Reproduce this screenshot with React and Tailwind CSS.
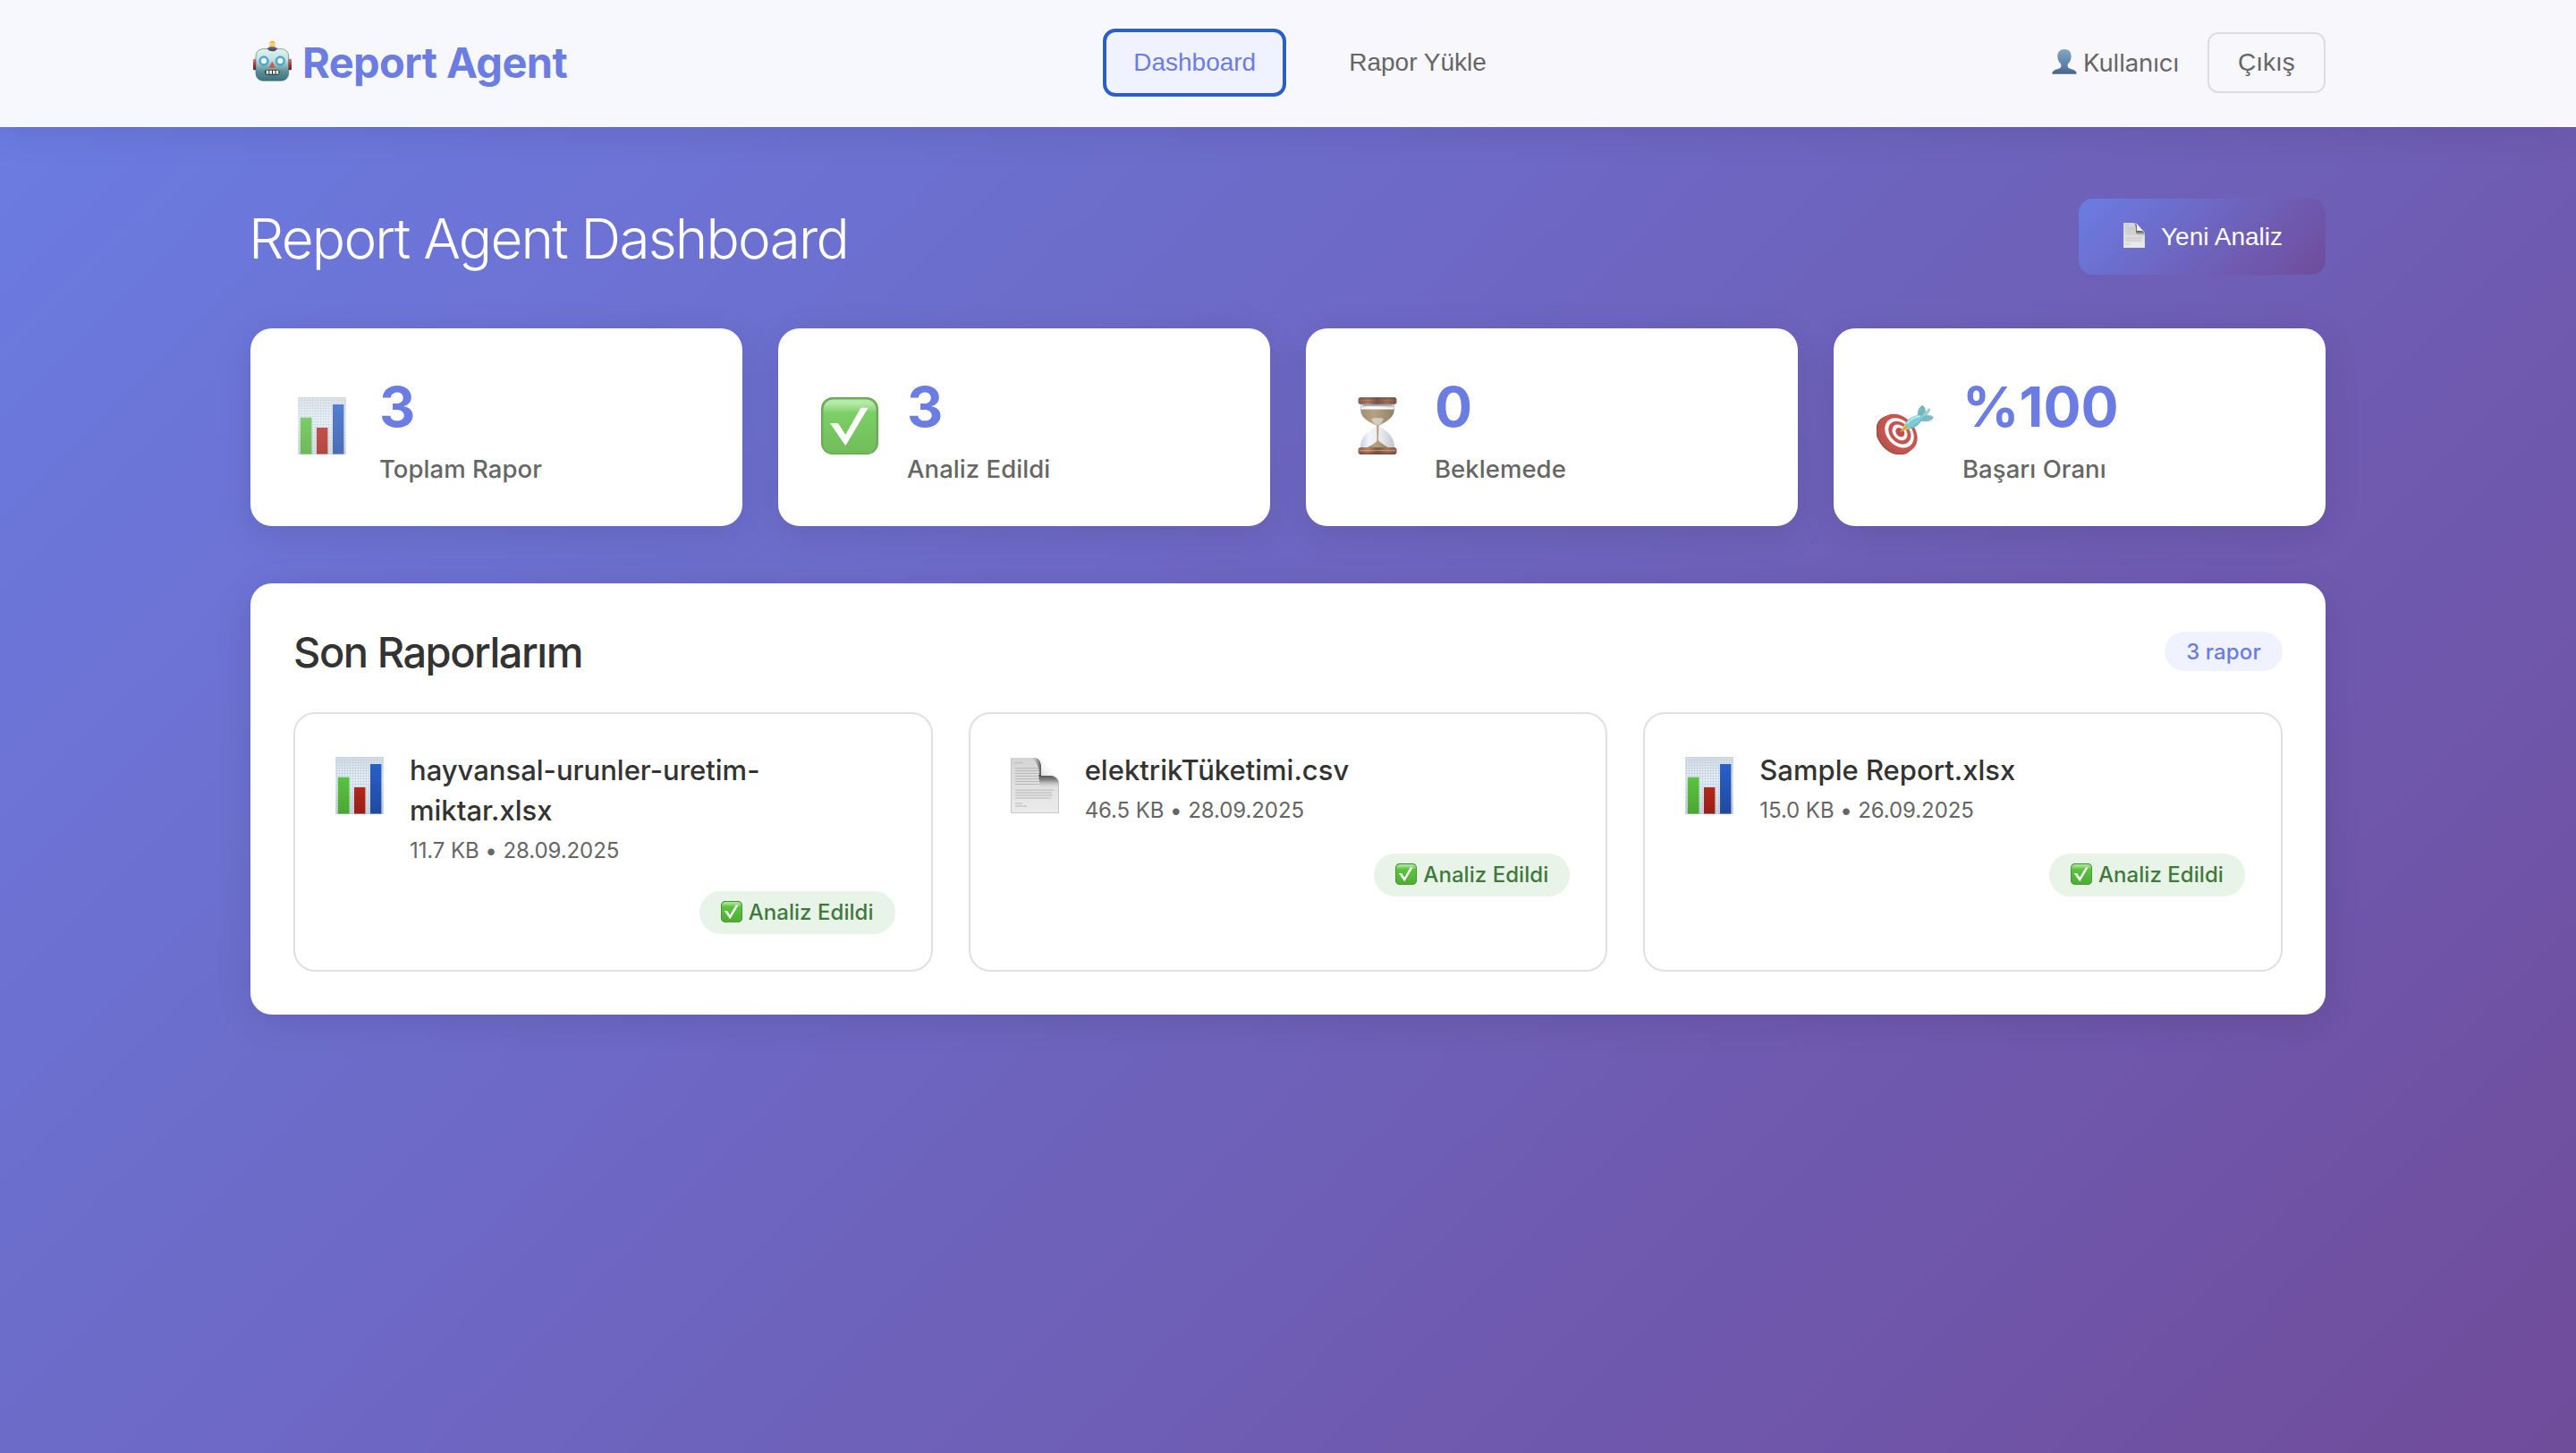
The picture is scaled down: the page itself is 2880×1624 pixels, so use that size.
import React, { useId } from "react";

function RobotIcon({ className }) {
  return (
    <svg className={className} viewBox="12 27 174 135" aria-hidden="true">
      <defs>
        <linearGradient id="robotFace" x1="0" y1="0" x2="0" y2="1">
          <stop offset="0" stopColor="#dff5f0" />
          <stop offset="0.35" stopColor="#c3dfe0" />
          <stop offset="0.7" stopColor="#5b8f99" />
          <stop offset="1" stopColor="#3d7280" />
        </linearGradient>
        <linearGradient id="robotBulb" x1="0" y1="0" x2="0" y2="1">
          <stop offset="0" stopColor="#f59a2e" />
          <stop offset="0.55" stopColor="#ffe37a" />
          <stop offset="1" stopColor="#e8922a" />
        </linearGradient>
        <linearGradient id="robotEar" x1="0" y1="0" x2="0" y2="1">
          <stop offset="0" stopColor="#e08078" />
          <stop offset="0.5" stopColor="#b03632" />
          <stop offset="1" stopColor="#5c1c1e" />
        </linearGradient>
      </defs>
      <rect x="21" y="86" width="14" height="38" rx="4" fill="url(#robotEar)" />
      <rect x="136" y="86" width="14" height="38" rx="4" fill="url(#robotEar)" />
      <path d="M68 54 Q70 46 85 46 Q100 46 103 54 L98 60 H73 Z" fill="#5f4480" />
      <circle cx="85.500" cy="37" r="10.500" fill="url(#robotBulb)" />
      <rect x="30" y="53" width="110" height="107" rx="24" fill="url(#robotFace)" stroke="#33606b" strokeOpacity="0.55" strokeWidth="3" />
      <path d="M70 54 H101 Q97 61 85 61 Q74 61 70 54 Z" fill="#4d4270" />
      <circle cx="57" cy="93" r="15.500" fill="#56b4d6" stroke="#2d88ad" strokeWidth="2" />
      <circle cx="57" cy="93" r="9" fill="#f7fdff" />
      <circle cx="112" cy="93" r="15.500" fill="#56b4d6" stroke="#2d88ad" strokeWidth="2" />
      <circle cx="112" cy="93" r="9" fill="#f7fdff" />
      <path d="M85 95 L96 116 H74 Z" fill="#d2564c" />
      <rect x="60" y="123" width="50" height="17" rx="8.500" fill="#2b2f36" />
      <path d="M65 125.500h8v12h-8zM76 125.500h8v12h-8zM87 125.500h8v12h-8zM98 125.500h8v12h-8z" fill="#f4f1e8" />
    </svg>
  );
}

function UserIcon({ className }) {
  return (
    <svg className={className} viewBox="222 165 84 84" aria-hidden="true">
      <defs>
        <linearGradient id="bust" x1="0" y1="165" x2="0" y2="249" gradientUnits="userSpaceOnUse">
          <stop offset="0" stopColor="#84a7c7" />
          <stop offset="0.6" stopColor="#5f83a6" />
          <stop offset="1" stopColor="#46658a" />
        </linearGradient>
      </defs>
      <path
        fill="url(#bust)"
        d="M264 165c14 0 23 9 23 23 0 12-5 20-12 27v7c0 4 3 6 8 8 14 4 22 7 22 18H223c0-11 8-14 22-18 5-2 8-4 8-8v-7c-7-7-12-15-12-27 0-14 9-23 23-23z"
      />
    </svg>
  );
}

function PageIcon({ className }) {
  const id = useId();
  return (
    <svg className={className} viewBox="0 0 54 62" preserveAspectRatio="none" aria-hidden="true">
      <defs>
        <linearGradient id={id + "p"} x1="0" y1="0" x2="0" y2="1">
          <stop offset="0" stopColor="#d4d4d4" />
          <stop offset="1" stopColor="#ececec" />
        </linearGradient>
        <linearGradient id={id + "s"} x1="0" y1="0" x2="0" y2="1">
          <stop offset="0" stopColor="#4c4c4c" />
          <stop offset="0.4" stopColor="#8a8a8a" />
          <stop offset="1" stopColor="#dcdcdc" stopOpacity="0" />
        </linearGradient>
        <linearGradient id={id + "l"} x1="1" y1="0" x2="0" y2="0">
          <stop offset="0" stopColor="#555555" />
          <stop offset="1" stopColor="#c8c8c8" stopOpacity="0" />
        </linearGradient>
        <linearGradient id={id + "c"} x1="0" y1="1" x2="1" y2="0">
          <stop offset="0" stopColor="#c2c2c2" />
          <stop offset="0.5" stopColor="#f7f7f7" />
          <stop offset="1" stopColor="#dedede" />
        </linearGradient>
      </defs>
      <path d="M0 0H26C31 0 33 3 34 7L53 24C54 26 54 28 54 30V62H0Z" fill={"url(#" + id + "p)"} />
      <path d="M0.500 0V61.500H53.500V30" fill="none" stroke="#c6c6c6" />
      <path
        d="M5 5.500H13M5 11.500H32M5 14.500H31M5 17.500H32M5 20.500H30M5 23.500H32M5 26.500H34M5 29.500H32M5 36H48M5 39H46M5 42H47M5 45H45M5 51H13M5 54H18"
        stroke="#b8b8b8"
        strokeWidth="1"
      />
      <path d="M22 0H28C32 1 33 4 34 8V20H32C32 9 28 2 22 0Z" fill={"url(#" + id + "l)"} />
      <path d="M31 19H46C51 20 54 24 54 31V34L33 33Z" fill={"url(#" + id + "s)"} />
      <path d="M27 0C32 0 34 4 34 9V20H45C49 20 52 23 54 27C53 23 50 20 47 17L34 3C32 1 30 0 27 0Z" fill={"url(#" + id + "c)"} />
    </svg>
  );
}

function ChartIcon({ className }) {
  const id = useId();
  return (
    <svg className={className} viewBox="0 0 64 64" aria-hidden="true">
      <defs>
        <linearGradient id={id + "b"} x1="0" y1="0" x2="0" y2="1">
          <stop offset="0" stopColor="#d9dfe4" />
          <stop offset="0.4" stopColor="#e9eff5" />
          <stop offset="1" stopColor="#cfd3d6" />
        </linearGradient>
        <pattern id={id + "g"} width="3" height="3" patternUnits="userSpaceOnUse">
          <path d="M0 0.500H3M0.500 0V3" stroke="#a9c3dd" strokeOpacity="0.400" />
        </pattern>
        <linearGradient id={id + "1"} x1="0" y1="0" x2="0" y2="1">
          <stop offset="0" stopColor="#5ac340" />
          <stop offset="1" stopColor="#4ba633" />
        </linearGradient>
        <linearGradient id={id + "2"} x1="0" y1="0" x2="0" y2="1">
          <stop offset="0" stopColor="#b3261b" />
          <stop offset="1" stopColor="#991e16" />
        </linearGradient>
        <linearGradient id={id + "3"} x1="0" y1="0" x2="0" y2="1">
          <stop offset="0" stopColor="#2760c8" />
          <stop offset="1" stopColor="#2049a0" />
        </linearGradient>
      </defs>
      <rect x="5" y="0" width="54" height="64" fill={"url(#" + id + "b)"} />
      <rect x="5" y="0" width="54" height="64" fill={"url(#" + id + "g)"} />
      <rect x="7.800" y="22.700" width="12.700" height="40.800" fill={"url(#" + id + "1)"} />
      <rect x="26" y="34" width="12.400" height="29.500" fill={"url(#" + id + "2)"} />
      <rect x="44" y="8" width="12.400" height="55.500" fill={"url(#" + id + "3)"} />
    </svg>
  );
}

function CheckIcon({ className }) {
  const id = useId();
  return (
    <svg className={className} viewBox="0 0 64 64" aria-hidden="true">
      <defs>
        <linearGradient id={id + "f"} x1="0" y1="0" x2="0" y2="1">
          <stop offset="0" stopColor="#a5e696" />
          <stop offset="0.08" stopColor="#a0e28f" />
          <stop offset="0.25" stopColor="#5bc440" />
          <stop offset="1" stopColor="#4fab33" />
        </linearGradient>
      </defs>
      <rect width="64" height="64" rx="13" fill="#3f8c2b" />
      <rect x="1" y="1" width="62" height="62.500" rx="12" fill="#4a9d33" />
      <rect x="2.600" y="2.600" width="58.800" height="60" rx="11" fill={"url(#" + id + "f)"} />
      <path d="M10 29H19L27.300 41.700L44.500 11.700H52.600L27.300 54.300Z" fill="#ffffff" />
    </svg>
  );
}

function HourglassIcon({ className }) {
  return (
    <svg className={className} viewBox="0 0 64 64" aria-hidden="true">
      <defs>
        <linearGradient id="hgWood" x1="0" y1="0" x2="1" y2="0">
          <stop offset="0" stopColor="#6b3a22" />
          <stop offset="0.25" stopColor="#a8623e" />
          <stop offset="0.5" stopColor="#5a2e1c" />
          <stop offset="0.75" stopColor="#94532f" />
          <stop offset="1" stopColor="#5f321e" />
        </linearGradient>
        <linearGradient id="hgGlass" x1="0" y1="0" x2="1" y2="0">
          <stop offset="0" stopColor="#bcc6e2" />
          <stop offset="0.25" stopColor="#f1f4fb" />
          <stop offset="0.6" stopColor="#e4e6ea" />
          <stop offset="1" stopColor="#b3b9c2" />
        </linearGradient>
        <linearGradient id="hgSand" x1="0" y1="0" x2="1" y2="0">
          <stop offset="0" stopColor="#8c7350" />
          <stop offset="0.4" stopColor="#a88a60" />
          <stop offset="1" stopColor="#7b6344" />
        </linearGradient>
      </defs>
      <path d="M13 7H51V14C51 22 43 27 34 32.500C44 38 51 45 51 56H13C13 45 20 38 31 32.500C20 27 13 22 13 14Z" fill="url(#hgGlass)" />
      <path d="M13.500 13H50.500V15C50 23 42 27 33.500 31.500H31C21 27 14 23 13.500 15Z" fill="url(#hgSand)" />
      <path d="M14 11.500H50V13.500H14Z" fill="#ffffff" />
      <path d="M16 8H48V10H16Z" fill="#8f98a8" />
      <path d="M25 24Q32 22 39 24L37 28L33.500 31H31L27 28Z" fill="#cfcac2" opacity="0.850" />
      <path d="M31.200 31H33.400L33 48C36 52 42 54 45 57H19C23 54 30 52 31.600 48Z" fill="url(#hgSand)" />
      <rect x="10.500" y="0" width="43" height="8" rx="3" fill="url(#hgWood)" />
      <rect x="11.500" y="0.400" width="41" height="2" rx="1" fill="#3f2a22" opacity="0.600" />
      <path d="M11 5.200H53" stroke="#402014" strokeWidth="1" opacity="0.600" />
      <rect x="10.500" y="56" width="43" height="8" rx="3" fill="url(#hgWood)" />
      <path d="M11.500 59.500H52.500" stroke="#d39a74" strokeWidth="1" opacity="0.600" />
      <path d="M12 62.600H52" stroke="#38190f" strokeWidth="1.600" opacity="0.700" />
    </svg>
  );
}

function TargetIcon({ className }) {
  return (
    <svg className={className} viewBox="24 13 192 192" aria-hidden="true">
      <g transform="rotate(48 92 135)">
        <ellipse cx="92" cy="143" rx="73" ry="56" fill="#8b1f1a" />
        <ellipse cx="93" cy="138" rx="72" ry="56" fill="#a82a23" />
        <ellipse cx="95" cy="128" rx="71" ry="53" fill="#bb2a24" />
        <ellipse cx="96" cy="127" rx="56" ry="42" fill="#fbfbfb" />
        <ellipse cx="96" cy="126" rx="43" ry="32" fill="#b92a24" />
        <ellipse cx="96" cy="125" rx="30" ry="22" fill="#fbfbfb" />
        <ellipse cx="96" cy="124" rx="17" ry="13" fill="#b3241f" />
      </g>
      <path d="M126 118L146 128L140 150L122 140Z" fill="#555555" opacity="0.180" />
      <path d="M102 130L120 101L137 117Z" fill="#e2b52c" />
      <path d="M102 130L128 110" stroke="#8f6b14" strokeWidth="3" />
      <path d="M162 80C160 60 166 46 178 39C190 48 190 60 186 78Z" fill="#54a5ab" />
      <path d="M172 80L200 49Q208 54 200 64L184 84Z" fill="#83c6ca" />
      <path d="M168 88C182 72 202 68 215 80C212 93 190 98 172 92Z" fill="#57adb4" />
      <path d="M120 103C127 84 148 73 172 72L179 84C171 102 153 117 133 120Z" fill="#5dc0ca" />
      <path d="M128 100C136 88 150 80 168 77" stroke="#a5e6eb" strokeWidth="6" fill="none" strokeLinecap="round" />
      <path d="M136 117C152 112 168 100 176 86" stroke="#3f989f" strokeWidth="3" fill="none" />
    </svg>
  );
}

const stats = [
  { icon: ChartIcon, value: "3", label: "Toplam Rapor" },
  { icon: CheckIcon, value: "3", label: "Analiz Edildi" },
  { icon: HourglassIcon, value: "0", label: "Beklemede" },
  { icon: TargetIcon, value: "%100", label: "Başarı Oranı" },
];

const reports = [
  { kind: "xlsx", name: "hayvansal-urunler-uretim-miktar.xlsx", meta: "11.7 KB • 28.09.2025" },
  { kind: "csv", name: "elektrikTüketimi.csv", meta: "46.5 KB • 28.09.2025" },
  { kind: "xlsx", name: "Sample Report.xlsx", meta: "15.0 KB • 26.09.2025" },
];

function Header() {
  return (
    <header className="h-[142px] bg-white/95 px-[280px] pb-0.5 shadow-[0_4px_40px_rgba(0,0,0,0.1)]">
      <div className="flex h-full items-center justify-between">
        <div className="flex w-[355px] items-center">
          <RobotIcon className="-mt-[3px] h-[45px] w-[58px] shrink-0" />
          <span className="pb-0.5 text-[47px] leading-none font-bold tracking-[-0.6px] whitespace-nowrap text-[#6b7de3]">Report Agent</span>
        </div>
        <nav className="flex items-center gap-[38px] font-['Liberation_Sans',Arial,sans-serif] text-[28px] leading-8">
          <button className="h-[76px] w-[205px] rounded-[14px] border-4 border-[#2860c8] bg-[#f0f2ff] text-[#6b7de3] shadow-[0_0_0_2px_#ffffff]">
            Dashboard
          </button>
          <button className="px-8 text-[#666666]">Rapor Yükle</button>
        </nav>
        <div className="flex w-[308px] items-center justify-between">
          <div className="flex items-center gap-[7px] pl-0.5">
            <UserIcon className="-mt-0.5 size-7" />
            <span className="pt-0.5 text-[27.5px] leading-none tracking-[-0.1px] text-[#666666]">Kullanıcı</span>
          </div>
          <button className="h-[68px] w-[132px] rounded-xl border-2 border-[#dddddd] font-['Liberation_Sans',Arial,sans-serif] text-[28px] leading-8 text-[#666666]">
            Çıkış
          </button>
        </div>
      </div>
    </header>
  );
}

function StatCard({ icon: Icon, value, label }) {
  return (
    <div className="flex h-[221px] items-center gap-8 rounded-3xl bg-white px-12 shadow-[0_8px_40px_rgba(0,0,0,0.1)]">
      <Icon className="-mt-[3px] size-16 shrink-0 opacity-80" />
      <div className="pt-1.5">
        <div className="text-[62.5px] leading-[78px] font-bold text-[#6b7de3]">{value}</div>
        <div className="mt-2 text-[27.5px] leading-[46px] font-[470] tracking-[0.05px] text-[#666666]">{label}</div>
      </div>
    </div>
  );
}

function ReportCard({ kind, name, meta }) {
  return (
    <div className="h-[290px] rounded-3xl border-2 border-[#e0e0e0] p-10">
      <div className="flex min-h-[102px] gap-6">
        <div className="flex size-16 shrink-0 justify-center pt-2">
          {kind === "csv" ? <PageIcon className="mt-px h-[62px] w-[54px] shrink-0" /> : <ChartIcon className="size-16 shrink-0" />}
        </div>
        <div className="pb-3">
          <div className="max-w-[530px] text-[31px] leading-[45px] font-medium text-[#333333]">{name}</div>
          <div className="mt-1 text-2xl leading-[38px] tracking-[-0.08px] text-[#666666]">{meta}</div>
        </div>
      </div>
      <div className="mt-3.5 flex justify-end">
        <div className="flex h-12 w-[219px] items-center gap-[7px] rounded-full bg-[#e9f4e9] pl-6 text-2xl font-[480] tracking-[0.05px] whitespace-nowrap text-[#3f7a3c]">
          <CheckIcon className="-mt-[2px] size-6 shrink-0" />
          Analiz Edildi
        </div>
      </div>
    </div>
  );
}

export default function App() {
  return (
    <div className="h-[1624px] w-[2880px] overflow-hidden bg-[linear-gradient(135deg,#6b7de3_0%,#704c9b_100%)] font-['Inter',sans-serif]">
      <Header />
      <main className="px-[280px] pt-20">
        <div className="flex h-[85px] items-center justify-between">
          <h1 className="-ml-0.5 pt-1 text-[62px] leading-none font-light tracking-[-1.79px] text-white">Report Agent Dashboard</h1>
          <button className="flex h-[85px] w-[276px] items-center rounded-2xl bg-[linear-gradient(135deg,#6b7de3_0%,#704c9b_100%)] pl-[50px] font-['Liberation_Sans',Arial,sans-serif] text-[28px] leading-8 whitespace-nowrap text-white">
            <PageIcon className="-mt-[3px] mr-[18px] h-7 w-6 shrink-0" />
            Yeni Analiz
          </button>
        </div>
        <section className="mt-[60px] grid grid-cols-4 gap-10">
          {stats.map((s) => (
            <StatCard key={s.label} {...s} />
          ))}
        </section>
        <section className="mt-16 rounded-3xl bg-white p-12 shadow-[0_8px_40px_rgba(0,0,0,0.1)]">
          <div className="flex h-14 items-center justify-between">
            <h2 className="text-[47px] leading-none font-medium tracking-[-1.48px] text-[#333333]">Son Raporlarım</h2>
            <span className="flex h-11 w-[132px] items-center justify-center rounded-full bg-[#f0f2ff] pt-0.5 text-2xl font-[480] tracking-[0.1px] text-[#6b7de3]">3 rapor</span>
          </div>
          <div className="mt-10 grid grid-cols-3 gap-10">
            {reports.map((r) => (
              <ReportCard key={r.name} {...r} />
            ))}
          </div>
        </section>
      </main>
    </div>
  );
}
